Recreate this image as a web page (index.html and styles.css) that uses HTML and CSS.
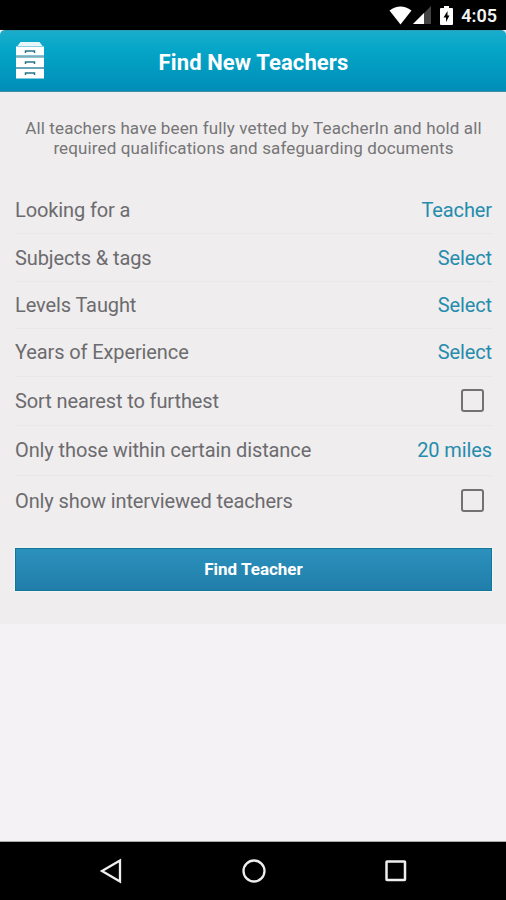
FILE: index.html
```html
<!DOCTYPE html>
<html lang="en">
<head>
    <meta charset="UTF-8">
    <title>Find New Teachers</title>
    <link rel="stylesheet" href="styles.css">
</head>
<body>
    <div class="status-bar">
        <svg class="wifi" width="23" height="19" viewBox="0 0 23 19">
            <path d="M0.5 4.5Q11.500 -3.500 22.500 4.500L11.500 18.500Z" fill="#fff"/>
        </svg>
        <svg class="signal" width="18" height="18" viewBox="0 0 18 18">
            <path d="M0 18L18 0V18Z" fill="#444"/>
            <path d="M0 18L11 7V18Z" fill="#fff"/>
        </svg>
        <svg class="battery" width="13" height="19" viewBox="0 0 13 19">
            <path d="M4 0H9V2H12Q13 2 13 3V18Q13 19 12 19H1Q0 19 0 18V3Q0 2 1 2H4Z" fill="#fff"/>
            <path d="M7.500 5L3.500 11.500H6V16L9.500 9.500H7.500Z" fill="#000"/>
        </svg>
        <span class="clock">4:05</span>
    </div>

    <header class="header">
        <svg class="cabinet" width="28" height="37" viewBox="0 0 28 37">
            <path d="M4.500 0H23.500L26.500 4H1.500Z" fill="#e8f7fb"/>
            <path d="M0 4.500H28V13.500H0ZM0 15.500H28V25H0ZM0 27H28V36.500H0Z" fill="#fff"/>
            <path d="M0 14.500H28M0 26H28" stroke="#8aa9b5" stroke-width="1.500"/>
            <path d="M9.500 11V9H18.500V11M9.500 22V20H18.500V22M9.500 33V31H18.500V33" fill="none" stroke="#27758c" stroke-width="1.500"/>
        </svg>
        <h1>Find New Teachers</h1>
    </header>

    <main class="content">
        <div class="panel">
            <p class="intro">All teachers have been fully vetted by TeacherIn and hold all<br>required qualifications and safeguarding documents</p>
            <ul class="filters">
                <li><span>Looking for a</span><a class="value">Teacher</a></li>
                <li><span>Subjects &amp; tags</span><a class="value">Select</a></li>
                <li><span>Levels Taught</span><a class="value">Select</a></li>
                <li><span>Years of Experience</span><a class="value">Select</a></li>
                <li class="tall"><span>Sort nearest to furthest</span><i class="checkbox"></i></li>
                <li class="tall"><span>Only those within certain distance</span><a class="value">20 miles</a></li>
                <li class="tall"><span>Only show interviewed teachers</span><i class="checkbox"></i></li>
            </ul>
            <button class="find">Find Teacher</button>
        </div>
    </main>

    <nav class="nav-bar">
        <svg width="24" height="26" viewBox="0 0 24 26">
            <path d="M3 13L21 2.500V23.500Z" fill="none" stroke="#eee" stroke-width="2.300"/>
        </svg>
        <svg width="26" height="26" viewBox="0 0 26 26">
            <circle cx="13" cy="13" r="10.500" fill="none" stroke="#eee" stroke-width="2.300"/>
        </svg>
        <svg width="24" height="26" viewBox="0 0 24 26">
            <rect x="2.500" y="3.500" width="18.500" height="18.500" rx="0.500" fill="none" stroke="#eee" stroke-width="2.500"/>
        </svg>
    </nav>
</body>
</html>
```
FILE: styles.css
```css
* {
    box-sizing: border-box;
}
body {
    margin: 0;
    height: 900px;
    display: flex;
    flex-direction: column;
    background: #f4f2f4;
    color: #6c6b6e;
    font-family: Roboto, sans-serif;
    overflow: hidden;
}

/* Status bar */
.status-bar {
    height: 30px;
    padding: 0 9px 0 0;
    display: flex;
    justify-content: flex-end;
    align-items: center;
    flex-shrink: 0;
    background: #000;
}
.signal {
    margin-left: 1px;
}
.battery {
    margin-left: 9px;
}
.clock {
    margin-left: 8px;
    padding-top: 2px;
    color: #f4f4f4;
    font-size: 18px;
    font-weight: 600;
    line-height: 20px;
}

/* Header */
.header {
    height: 62px;
    padding: 0 15px 0 16px;
    display: grid;
    grid-template-columns: 28px 1fr 28px;
    align-items: center;
    flex-shrink: 0;
    background: linear-gradient(#1aadcb, #05a6c8 30%, #008db8);
    border-top: 1px solid #2a9db5;
    border-bottom: 1px solid #3f8ea6;
    border-radius: 5px 5px 0 0;
}
.cabinet {
    margin-bottom: 2px;
}
.header h1 {
    margin: 0;
    padding-top: 2px;
    color: #fff;
    font-size: 22px;
    font-weight: 700;
    letter-spacing: 0.12px;
    text-align: center;
}

/* Search form */
.content {
    flex: 1;
    border-bottom: 1px solid #aaa;
}
.panel {
    height: 532px;
    padding: 26px 14px 0 15px;
    background: #efedee;
}
.intro {
    margin: 0 0 29px;
    color: #767577;
    font-size: 17px;
    letter-spacing: 0.13px;
    line-height: 20px;
    text-align: center;
    white-space: nowrap;
}
.filters {
    margin: 0;
    padding: 0;
    list-style: none;
    font-size: 20px;
    letter-spacing: -0.11px;
}
.filters li {
    height: 47.400px;
    display: flex;
    justify-content: space-between;
    align-items: center;
    border-bottom: 1px solid #e9e7e9;
}
.filters .tall {
    height: 49.600px;
}
.filters li:last-child {
    border-bottom: 0;
}
.value {
    color: #258cad;
}
.checkbox {
    width: 23px;
    height: 23px;
    margin: 0 8px 1px 0;
    border: 2px solid #727173;
    border-radius: 3px;
}
.find {
    width: 100%;
    height: 43px;
    margin-top: 23px;
    padding: 0 0 2px;
    display: block;
    background: linear-gradient(#2c91bd, #217eaa);
    border: 1px solid #117799;
    color: #fff;
    font-family: inherit;
    font-size: 17px;
    font-weight: 700;
    box-shadow: 0 0 2px #fff;
}

/* Navigation bar */
.nav-bar {
    height: 58px;
    padding: 0 98px 0 99px;
    display: flex;
    justify-content: space-between;
    align-items: center;
    flex-shrink: 0;
    background: #000;
}
```
